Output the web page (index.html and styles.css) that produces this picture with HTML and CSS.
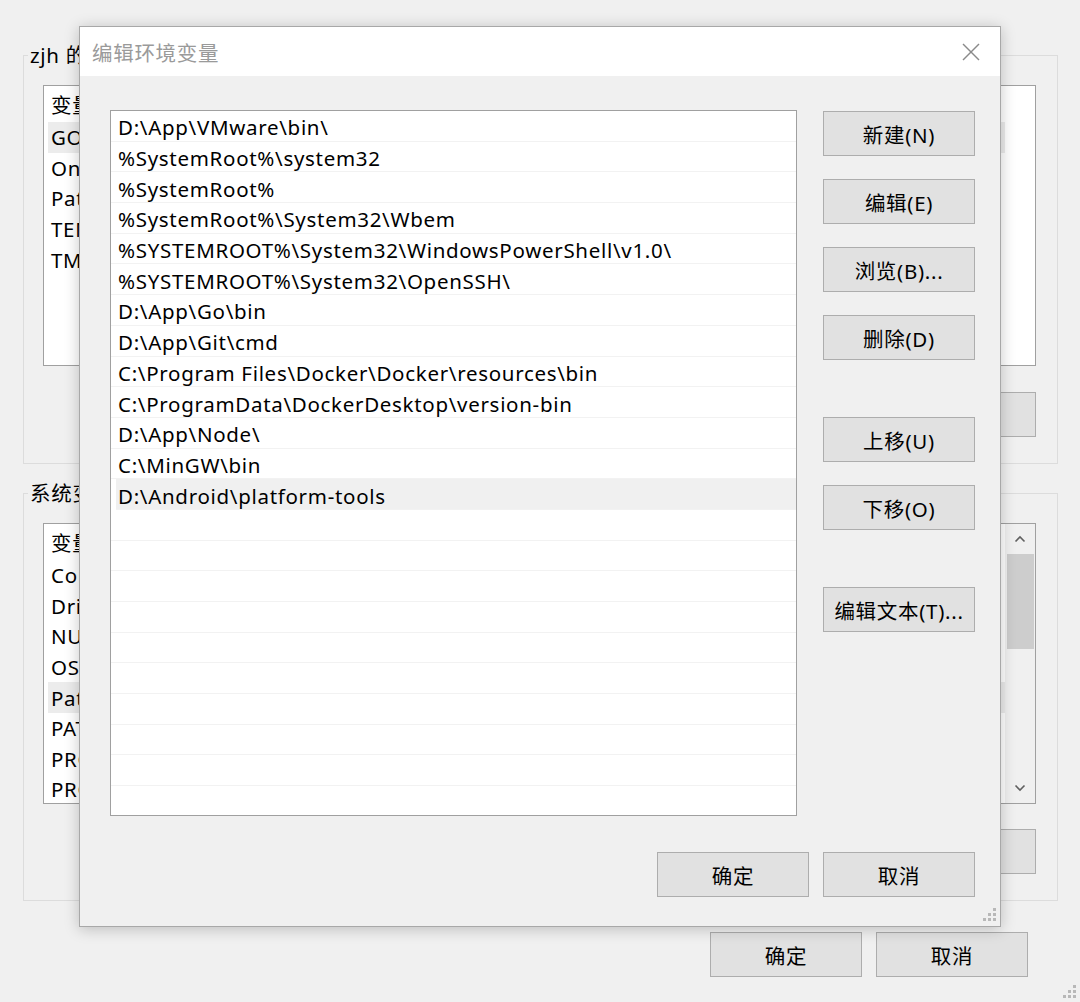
FILE: index.html
```html
<!DOCTYPE html>
<html lang="zh-CN">
<head>
    <meta charset="UTF-8">
    <meta name="viewport" content="width=device-width, initial-scale=1.0">
    <title>编辑环境变量</title>
    <link rel="stylesheet" href="styles.css">
</head>
<body>
    <!-- 背后的“环境变量”窗口 -->
    <div class="env-window">
        <fieldset class="group">
            <legend>zjh 的用户变量(U)</legend>
            <div class="listview">
                <div class="lv-header">变量</div>
                <div class="lv-row selected">GOPATH</div>
                <div class="lv-row">OneDrive</div>
                <div class="lv-row">Path</div>
                <div class="lv-row">TEMP</div>
                <div class="lv-row">TMP</div>
            </div>
            <div class="group-buttons">
                <button class="win-btn">新建(N)...</button>
                <button class="win-btn">编辑(E)...</button>
                <button class="win-btn">删除(D)</button>
            </div>
        </fieldset>

        <fieldset class="group group-system">
            <legend>系统变量(S)</legend>
            <div class="listview has-scroll">
                <div class="lv-body">
                    <div class="lv-header">变量</div>
                    <div class="lv-row">ComSpec</div>
                    <div class="lv-row">DriverData</div>
                    <div class="lv-row">NUMBER_OF_PROCESSORS</div>
                    <div class="lv-row">OS</div>
                    <div class="lv-row selected">Path</div>
                    <div class="lv-row">PATHEXT</div>
                    <div class="lv-row">PROCESSOR_ARCHITECTURE</div>
                    <div class="lv-row">PROCESSOR_IDENTIFIER</div>
                </div>
                <div class="scrollbar">
                    <div class="sb-arrow">
                        <svg width="12" height="8" viewBox="0 0 12 8"><polyline points="1.5,6.5 6,2 10.5,6.5" fill="none" stroke="#606060" stroke-width="1.6"/></svg>
                    </div>
                    <div class="sb-track"><div class="sb-thumb"></div></div>
                    <div class="sb-arrow">
                        <svg width="12" height="8" viewBox="0 0 12 8"><polyline points="1.5,1.5 6,6 10.5,1.5" fill="none" stroke="#606060" stroke-width="1.6"/></svg>
                    </div>
                </div>
            </div>
            <div class="group-buttons">
                <button class="win-btn">新建(W)...</button>
                <button class="win-btn">编辑(I)...</button>
                <button class="win-btn">删除(L)</button>
            </div>
        </fieldset>

        <div class="window-buttons">
            <button class="win-btn">确定</button>
            <button class="win-btn">取消</button>
        </div>

        <svg class="grip grip-page" width="14" height="14" viewBox="0 0 14 14">
            <rect x="10" y="0" width="3" height="3"/>
            <rect x="5" y="5" width="3" height="3"/><rect x="10" y="5" width="3" height="3"/>
            <rect x="0" y="10" width="3" height="3"/><rect x="5" y="10" width="3" height="3"/><rect x="10" y="10" width="3" height="3"/>
        </svg>
    </div>

    <!-- 前面的“编辑环境变量”对话框 -->
    <div class="dialog">
        <div class="dialog-title">
            <span class="title-text">编辑环境变量</span>
            <svg class="close-icon" width="18" height="18" viewBox="0 0 18 18">
                <line x1="1" y1="1" x2="17" y2="17" stroke="#8a8a8a" stroke-width="1.4"/>
                <line x1="17" y1="1" x2="1" y2="17" stroke="#8a8a8a" stroke-width="1.4"/>
            </svg>
        </div>

        <div class="dialog-body">
            <div class="dialog-main">
                <div class="path-list">
                    <div class="path-row">D:\App\VMware\bin\</div>
                    <div class="path-row">%SystemRoot%\system32</div>
                    <div class="path-row">%SystemRoot%</div>
                    <div class="path-row">%SystemRoot%\System32\Wbem</div>
                    <div class="path-row">%SYSTEMROOT%\System32\WindowsPowerShell\v1.0\</div>
                    <div class="path-row">%SYSTEMROOT%\System32\OpenSSH\</div>
                    <div class="path-row">D:\App\Go\bin</div>
                    <div class="path-row">D:\App\Git\cmd</div>
                    <div class="path-row">C:\Program Files\Docker\Docker\resources\bin</div>
                    <div class="path-row">C:\ProgramData\DockerDesktop\version-bin</div>
                    <div class="path-row">D:\App\Node\</div>
                    <div class="path-row">C:\MinGW\bin</div>
                    <div class="path-row selected">D:\Android\platform-tools</div>
                    <div class="path-row"></div>
                    <div class="path-row"></div>
                    <div class="path-row"></div>
                    <div class="path-row"></div>
                    <div class="path-row"></div>
                    <div class="path-row"></div>
                    <div class="path-row"></div>
                    <div class="path-row"></div>
                    <div class="path-row"></div>
                    <div class="path-row"></div>
                </div>

                <div class="side-buttons">
                    <button class="win-btn">新建(N)</button>
                    <button class="win-btn">编辑(E)</button>
                    <button class="win-btn">浏览(B)...</button>
                    <button class="win-btn">删除(D)</button>
                    <button class="win-btn spaced">上移(U)</button>
                    <button class="win-btn">下移(O)</button>
                    <button class="win-btn spaced">编辑文本(T)...</button>
                </div>
            </div>

            <div class="dialog-footer">
                <button class="win-btn">确定</button>
                <button class="win-btn">取消</button>
            </div>
        </div>

        <svg class="grip grip-dialog" width="14" height="14" viewBox="0 0 14 14">
            <rect x="10" y="0" width="3" height="3"/>
            <rect x="5" y="5" width="3" height="3"/><rect x="10" y="5" width="3" height="3"/>
            <rect x="0" y="10" width="3" height="3"/><rect x="5" y="10" width="3" height="3"/><rect x="10" y="10" width="3" height="3"/>
        </svg>
    </div>
</body>
</html>
```

FILE: styles.css
```css
body {
    margin: 0;
    background: #f0f0f0;
    font-family: "Noto Sans", "Noto Sans CJK SC", sans-serif;
    font-size: 20.5px;
    letter-spacing: 0.7px;
    color: #000;
}

.env-window {
    position: relative;
    height: 1002px;
    padding-top: 43px;
    box-sizing: border-box;
    overflow: hidden;
}

.win-btn {
    width: 152px;
    height: 45px;
    padding: 0;
    border: 1px solid #adadad;
    background: #e1e1e1;
    font-family: inherit;
    font-size: inherit;
    letter-spacing: inherit;
    color: #000;
    box-sizing: border-box;
}

/* group boxes */
.group {
    margin: 0 22px 0 23px;
    padding: 18px 21px 26px 19px;
    border: 1px solid #dcdcdc;
    min-width: 0;
}

.group legend {
    margin-left: -15px;
    padding: 0 2px;
    line-height: 24px;
}

.group-system {
    margin-top: 17px;
}

.listview {
    height: 281px;
    box-sizing: border-box;
    border: 1px solid #a0a0a0;
    background: #fff;
    overflow: hidden;
    white-space: nowrap;
}

.listview.has-scroll {
    display: flex;
}

.lv-body {
    flex: 1;
    overflow: hidden;
}

.lv-header {
    height: 36px;
    display: flex;
    align-items: center;
    padding-left: 7px;
}

.lv-row {
    height: 30.6px;
    display: flex;
    align-items: center;
    margin: 0 30px 0 4px;
    padding-left: 3px;
}

.lv-body .lv-row {
    margin-right: 0;
}

.lv-row.selected {
    background: #ececec;
}

.scrollbar {
    width: 30px;
    display: flex;
    flex-direction: column;
    background: #f0f0f0;
}

.sb-arrow {
    height: 30px;
    display: flex;
    align-items: center;
    justify-content: center;
}

.sb-track {
    flex: 1;
}

.sb-thumb {
    height: 95px;
    margin: 0 1px 0 2px;
    background: #cdcdcd;
}

.group-buttons {
    display: flex;
    justify-content: flex-end;
    gap: 14px;
    margin-top: 26px;
}

.group-system .group-buttons {
    margin-top: 25px;
}

.window-buttons {
    display: flex;
    justify-content: flex-end;
    gap: 14px;
    margin: 31px 52px 0 0;
}

.grip {
    position: absolute;
    fill: #b8b8b8;
}

.grip-page {
    right: 3px;
    bottom: 3px;
}

/* dialog */
.dialog {
    position: absolute;
    left: 79px;
    top: 26px;
    width: 922px;
    height: 901px;
    box-sizing: border-box;
    border: 1px solid #a8a8a8;
    background: #f0f0f0;
    box-shadow: 0 2px 14px rgba(0, 0, 0, 0.22);
    display: flex;
    flex-direction: column;
}

.dialog-title {
    height: 49px;
    flex-shrink: 0;
    background: #fff;
    display: flex;
    align-items: center;
    justify-content: space-between;
    padding: 0 20px 0 12px;
}

.title-text {
    color: #9a9a9a;
}

.dialog-body {
    flex: 1;
    padding: 34px 25px 0 30px;
}

.dialog-main {
    display: flex;
    height: 706px;
}

.path-list {
    width: 687px;
    box-sizing: border-box;
    border: 1px solid #a0a0a0;
    background: #fff;
    overflow: hidden;
    white-space: nowrap;
}

.path-row {
    height: 30.7px;
    box-sizing: border-box;
    border-bottom: 1px solid #f2f2f2;
    padding: 3px 0 0 7px;
    display: flex;
    align-items: center;
}

.path-row.selected {
    background: #f0f0f0;
    margin-left: 5px;
    padding-left: 2px;
}

.side-buttons {
    width: 152px;
    margin-left: 26px;
    padding-top: 1px;
    display: flex;
    flex-direction: column;
    gap: 23px;
}

.side-buttons .spaced {
    margin-top: 34px;
}

.dialog-footer {
    display: flex;
    justify-content: flex-end;
    gap: 14px;
    margin-top: 36px;
}

.grip-dialog {
    right: 3px;
    bottom: 4px;
}
```
